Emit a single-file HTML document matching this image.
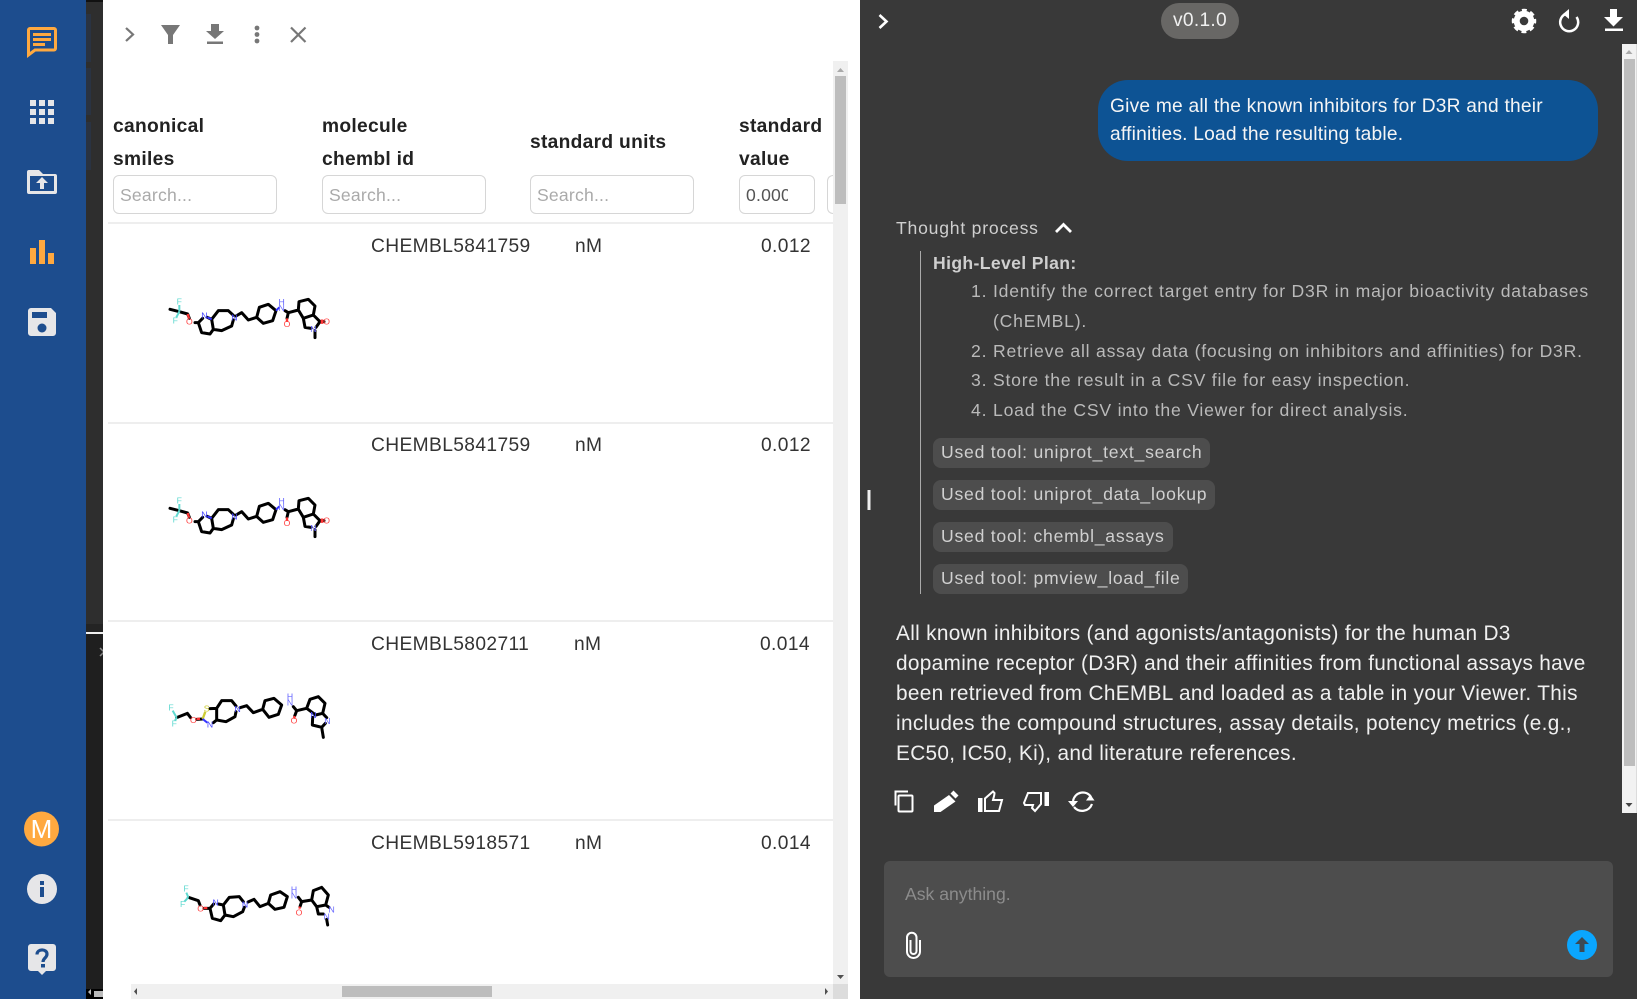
<!DOCTYPE html>
<html><head><meta charset="utf-8"><title>Chat and table</title>
<style>
html,body{margin:0;padding:0;width:1637px;height:999px;overflow:hidden;background:#393939;font-family:"Liberation Sans",sans-serif}
div,span,svg,input{position:absolute;box-sizing:border-box}
svg{display:block;overflow:visible}
.th{font-weight:700;font-size:19.2px;letter-spacing:.3px;color:#222;line-height:33px;white-space:nowrap}
.in{top:175px;height:39px;border:1px solid #d6d6d6;border-radius:6px;background:#fff;font-size:17.6px;letter-spacing:.2px;color:#aaa;padding:9px 6px;line-height:20px;overflow:hidden;white-space:nowrap}
.hr{left:108px;width:725px;height:2px;background:#eee}
.td{font-size:19.2px;letter-spacing:.38px;color:#333;line-height:24px;white-space:nowrap}
.t{white-space:nowrap;letter-spacing:.5px}
.li{color:#bababa;font-size:17.6px;line-height:24px;letter-spacing:.78px;white-space:nowrap}
.chip{left:933px;height:30px;background:#4d4d4d;border-radius:8px;color:#d0d0d0;font-size:17.6px;letter-spacing:.76px;line-height:28px;padding-left:8px;white-space:nowrap}
.ans{left:896px;color:#f0f0f0;font-size:20.8px;letter-spacing:.32px;line-height:30px;white-space:nowrap}
.mol{filter:blur(.35px)}
.mol text{font-family:"Liberation Sans",sans-serif;font-size:26px;text-anchor:middle;dominant-baseline:central}
.mol .b{fill:none;stroke:#000;stroke-width:9;stroke-linejoin:round;stroke-linecap:round}
.mol .c{fill:none;stroke:#5fd9d0;stroke-width:6}
.mol .r{fill:none;stroke:#f33;stroke-width:7}
.mol .u{fill:none;stroke:#33f;stroke-width:6}
</style></head><body>

<!-- left rail -->
<div style="left:0;top:0;width:86px;height:999px;background:#1d4d8e"></div>
<svg style="left:0;top:0" width="86" height="999">
 <path d="M30 28.500h24a1.500 1.500 0 0 1 1.500 1.500v18.500a1.500 1.500 0 0 1-1.500 1.500H35l-6.500 5V30a1.500 1.500 0 0 1 1.500-1.500z" fill="none" stroke="#ffa940" stroke-width="3"/>
 <path d="M33 33h18v3H33zM33 38h18v3H33zM33 43h12v3H33z" fill="#ffa940"/>
 <path d="M30 100h6v6h-6zM39 100h6v6h-6zM48 100h6v6h-6zM30 109h6v6h-6zM39 109h6v6h-6zM48 109h6v6h-6zM30 118h6v6h-6zM39 118h6v6h-6zM48 118h6v6h-6z" fill="#e6e6e8"/>
 <path fill-rule="evenodd" d="M29 170h10l4 4h12a2 2 0 0 1 2 2v16a2 2 0 0 1-2 2H29a2 2 0 0 1-2-2v-20a2 2 0 0 1 2-2zM30 176v15h24v-15z" fill="#e6e6e8"/>
 <path d="M42 177l6 6h-4v6h-4v-6h-4z" fill="#e6e6e8"/>
 <path d="M30 248h6v16h-6zM39 240h6v24h-6zM48 253h6v11h-6z" fill="#ffa940"/>
 <path fill-rule="evenodd" d="M31 308h20l5 5v20a3 3 0 0 1-3 3H31a3 3 0 0 1-3-3v-22a3 3 0 0 1 3-3zM32 312v6h15v-6z" fill="#e6e6e8"/>
 <circle cx="42" cy="328" r="4.500" fill="#1d4d8e"/>
 <circle cx="41.500" cy="829" r="17.500" fill="#ffa940"/>
 <circle cx="42" cy="889" r="15" fill="#e6e6e8"/>
 <path d="M40 887h4v10h-4zM40 881h4v4h-4z" fill="#1d4d8e"/>
 <path d="M31 944h22a3 3 0 0 1 3 3v21a3 3 0 0 1-3 3h-7l-4 4-4-4h-7a3 3 0 0 1-3-3v-21a3 3 0 0 1 3-3z" fill="#e6e6e8"/>
 <path d="M37 954.500c0-6 10-6 10-.5 0 4-4 4-4 8" fill="none" stroke="#1d4d8e" stroke-width="3.200"/>
 <path d="M41 964h4v3.500h-4z" fill="#1d4d8e"/>
</svg>
<div style="left:24px;top:812px;width:35px;height:35px;line-height:35px;text-align:center;color:#fff;font-size:26px">M</div>

<!-- dark strip -->
<div style="left:86px;top:0;width:18px;height:632px;background:#2e2e2e"></div>
<div style="left:86px;top:0;width:18px;height:2px;background:#111"></div>
<div style="left:86px;top:14px;width:5px;height:48px;background:#2a3342"></div>
<div style="left:86px;top:68px;width:5px;height:47px;background:#2a3342"></div>
<div style="left:86px;top:122px;width:5px;height:48px;background:#2a3342"></div>
<div style="left:86px;top:624px;width:18px;height:8px;background:#242424"></div>
<div style="left:86px;top:632px;width:18px;height:2px;background:#f0f0f0"></div>
<div style="left:86px;top:634px;width:18px;height:365px;background:#1f1f1f"></div>
<div style="left:86px;top:989px;width:18px;height:10px;background:#000"></div>
<div style="left:94px;top:991px;width:10px;height:6px;background:#bbb"></div>
<svg style="left:86px;top:640px" width="18" height="359"><path d="M14 8l4 4-4 4" fill="none" stroke="#888" stroke-width="1.500"/><path d="M5 349l-3 3 3 3z" fill="#bbb"/></svg>

<!-- white panel -->
<div style="left:103px;top:0;width:757px;height:999px;background:#fff"></div>

<!-- toolbar -->
<svg style="left:103px;top:0" width="220" height="60">
 <path d="M23 28l7 6.500-7 6.500" fill="none" stroke="#777" stroke-width="2.200"/>
 <path d="M58 25h19l-7 10v9h-5v-9z" fill="#777"/>
 <path d="M108 24h8v7h5l-9 8-9-8h5z" fill="#777"/>
 <path d="M104 41.500h16V44h-16z" fill="#777"/>
 <circle cx="154" cy="28" r="2.400" fill="#777"/><circle cx="154" cy="34.500" r="2.400" fill="#777"/><circle cx="154" cy="41" r="2.400" fill="#777"/>
 <path d="M188 27.500l14.500 14.500M202.500 27.500L188 42" fill="none" stroke="#777" stroke-width="2.200"/>
</svg>

<!-- headers -->
<div class="th" style="left:113px;top:110px">canonical<br>smiles</div>
<div class="th" style="left:322px;top:110px">molecule<br>chembl id</div>
<div class="th" style="left:530px;top:126px">standard units</div>
<div class="th" style="left:739px;top:110px">standard<br>value</div>
<div class="in" style="left:113px;width:164px">Search...</div>
<div class="in" style="left:322px;width:164px">Search...</div>
<div class="in" style="left:530px;width:164px">Search...</div>
<div class="in" style="left:739px;width:76px;color:#555;padding-right:27px"><span style="position:relative;display:block;width:42px;overflow:hidden">0.0001</span></div>
<div class="in" style="left:827px;width:20px;border-right:0;border-radius:6px 0 0 6px"></div>

<!-- rows -->
<div class="hr" style="top:222px"></div>
<div class="hr" style="top:422px"></div>
<div class="hr" style="top:620px"></div>
<div class="hr" style="top:819px"></div>
<div class="td" style="left:371px;top:234.500px">CHEMBL5841759</div><div class="td" style="left:575px;top:234.500px">nM</div><div class="td" style="left:761px;top:234.500px">0.012</div>
<div class="td" style="left:371px;top:433.500px">CHEMBL5841759</div><div class="td" style="left:575px;top:433.500px">nM</div><div class="td" style="left:761px;top:433.500px">0.012</div>
<div class="td" style="left:371px;top:632.500px">CHEMBL5802711</div><div class="td" style="left:574px;top:632.500px">nM</div><div class="td" style="left:760px;top:632.500px">0.014</div>
<div class="td" style="left:371px;top:832px">CHEMBL5918571</div><div class="td" style="left:575px;top:832px">nM</div><div class="td" style="left:761px;top:832px">0.014</div>

<!-- molecule 1 -->
<svg class="mol" style="left:150px;top:270px" width="200" height="110" viewBox="0 0 600 330">
 <path class="b" d="M60 118L88 125L113 132L118 145M135 158L145 158M145 158L155 188L180 192L190 178L185 148L172 142M145 158L158 145M185 148L205 122L235 122L250 136M250 150L245 168L215 182L190 178M258 138L275 128L295 150L320 142L328 112L355 103L378 122L368 152L340 160L320 142M405 122L415 128L445 120L447 95L475 88L495 108L490 135L460 145L445 120M415 128L411 145M460 145L465 172L483 175M490 135L510 155L522 155M495 182L495 203M510 155L498 172"/>
 <path class="c" d="M88 125L88 105M88 125L79 142"/><path class="r" d="M113 132L117 145M411 145L411 156M512 152L520 152M512 158L520 158"/>
 <path class="u" d="M378 122L388 112M185 148L172 142"/>
 <text x="88" y="95" fill="#5fd9d0">F</text><text x="76" y="152" fill="#5fd9d0">F</text><text x="118" y="155" fill="#f44">O</text><text x="163" y="137" fill="#44f">N</text><text x="253" y="142" fill="#44f">N</text><text x="395" y="96" fill="#66f">H</text><text x="395" y="114" fill="#66f">N</text><text x="411" y="162" fill="#f44">O</text><text x="530" y="155" fill="#f44">O</text><text x="490" y="177" fill="#66f">N</text>
</svg>
<!-- molecule 2 -->
<svg class="mol" style="left:150px;top:469px" width="200" height="110" viewBox="0 0 600 330">
 <path class="b" d="M60 118L88 125L113 132L118 145M135 158L145 158M145 158L155 188L180 192L190 178L185 148L172 142M145 158L158 145M185 148L205 122L235 122L250 136M250 150L245 168L215 182L190 178M258 138L275 128L295 150L320 142L328 112L355 103L378 122L368 152L340 160L320 142M405 122L415 128L445 120L447 95L475 88L495 108L490 135L460 145L445 120M415 128L411 145M460 145L465 172L483 175M490 135L510 155L522 155M495 182L495 203M510 155L498 172"/>
 <path class="c" d="M88 125L88 105M88 125L79 142"/><path class="r" d="M113 132L117 145M411 145L411 156M512 152L520 152M512 158L520 158"/>
 <path class="u" d="M378 122L388 112M185 148L172 142"/>
 <text x="88" y="95" fill="#5fd9d0">F</text><text x="76" y="152" fill="#5fd9d0">F</text><text x="118" y="155" fill="#f44">O</text><text x="163" y="137" fill="#44f">N</text><text x="253" y="142" fill="#44f">N</text><text x="395" y="96" fill="#66f">H</text><text x="395" y="114" fill="#66f">N</text><text x="411" y="162" fill="#f44">O</text><text x="530" y="155" fill="#f44">O</text><text x="490" y="177" fill="#66f">N</text>
</svg>
<!-- molecules 3 and 4 -->
<svg class="mol" style="left:150px;top:670px" width="200" height="270" viewBox="0 0 600 810">
 <path class="b" d="M80 143L112 130L122 143M140 148L158 147M180 116L200 115M190 158L200 150L200 115L215 92L245 92L258 108M258 125L255 140L228 155L200 150M270 113L290 107L310 128L338 118L345 92L372 85L395 105L385 133L357 142L338 118M430 110L440 122L470 115L480 88L505 80L525 100L518 130L497 135L470 115M440 122L434 138M488 142L487 165L515 172L526 160M518 130L530 143M515 172L520 202"/>
 <path class="c" d="M80 143L68 122M80 143L75 152"/><path class="r" d="M434 138L432 146M140 147L150 146"/>
 <path fill="none" stroke="#cc3" stroke-width="7" d="M158 147L166 125"/><path class="u" d="M158 147L172 158"/>
 <text x="63" y="113" fill="#5fd9d0">F</text><text x="73" y="160" fill="#5fd9d0">F</text><text x="130" y="150" fill="#f44">O</text><text x="170" y="115" fill="#cc3">S</text><text x="180" y="163" fill="#44f">N</text><text x="263" y="117" fill="#44f">N</text><text x="420" y="80" fill="#66f">H</text><text x="420" y="98" fill="#66f">N</text><text x="432" y="152" fill="#f44">O</text><text x="490" y="135" fill="#44f">N</text><text x="532" y="153" fill="#66f">N</text>
 <path class="b" d="M115 682L145 692L150 705M162 715L180 715M180 715L191 702M205 702L220 705M180 715L187 745L212 752L225 735L220 705L238 682L268 680L280 695M283 712L278 725L250 740L225 735M294 696L312 688L330 710L355 700L362 675L390 665L412 680L402 712L375 718L355 700M445 682L455 695L485 690L490 662L515 652L535 675L527 705L500 710L485 690M455 695L450 710M500 710L505 732L520 732M527 705L537 712M530 748L533 765"/>
 <path class="c" d="M115 682L109 668M115 682L103 695"/><path class="r" d="M450 710L448 716M162 714L172 714"/>
 <text x="108" y="655" fill="#5fd9d0">F</text><text x="98" y="702" fill="#5fd9d0">F</text><text x="152" y="715" fill="#f44">O</text><text x="197" y="698" fill="#44f">N</text><text x="285" y="703" fill="#44f">N</text><text x="432" y="658" fill="#66f">H</text><text x="432" y="676" fill="#66f">N</text><text x="447" y="727" fill="#f44">O</text><text x="545" y="718" fill="#66f">N</text><text x="530" y="740" fill="#66f">N</text>
</svg>

<!-- panel scrollbars -->
<div style="left:833px;top:61px;width:15px;height:923px;background:#f0f0f0"></div>
<div style="left:835px;top:76px;width:11px;height:128px;background:#bdbdbd"></div>
<svg style="left:833px;top:61px" width="15" height="923"><path d="M4 11l3.500-4 3.500 4z" fill="#aaa"/><path d="M4 914h7l-3.500 4z" fill="#505050"/></svg>
<div style="left:131px;top:984px;width:702px;height:15px;background:#f0f0f0"></div>
<div style="left:833px;top:984px;width:15px;height:15px;background:#dcdcdc"></div>
<div style="left:342px;top:986px;width:150px;height:11px;background:#bdbdbd"></div>
<svg style="left:131px;top:984px" width="702" height="15"><path d="M6 4v7l-3-3.500z" fill="#505050"/><path d="M694 4v7l3-3.500z" fill="#505050"/></svg>

<!-- chat panel -->
<div style="left:860px;top:0;width:777px;height:999px;background:#393939"></div>
<svg style="left:860px;top:0" width="777" height="999">
 <path d="M19.500 15l7 6.500-7 6.500" fill="none" stroke="#fff" stroke-width="2.600"/>
 <path d="M9 490v20" stroke="#f0f0f0" stroke-width="3"/>
 <!-- gear -->
 <g transform="translate(664 21)">
  <circle r="7.300" fill="none" stroke="#fff" stroke-width="6"/>
  <circle r="10.500" fill="none" stroke="#fff" stroke-width="3.500" stroke-dasharray="4.750 3.500" stroke-dashoffset="2.400"/>
 </g>
 <!-- reset -->
 <path d="M707 13.500A9 9 0 1 0 716.500 17" fill="none" stroke="#fff" stroke-width="2.500"/>
 <path d="M709 9v10l-6-5z" fill="#fff"/>
 <!-- download -->
 <path d="M750 9h7v8h6l-9.500 9.500L744 17h6z" fill="#fff"/><path d="M745 28.500h18V31h-18z" fill="#fff"/>
 <!-- chevron up -->
 <path d="M196 233l7.500-7.500 7.500 7.500" fill="none" stroke="#fff" stroke-width="2.800" transform="translate(0 -1)"/>
 <!-- vertical rule -->
 <path d="M60.500 251v343" stroke="#aaa" stroke-width="1"/>
 <!-- copy -->
 <path d="M48 791.500H35.500v14" fill="none" stroke="#fff" stroke-width="2"/><rect x="38.500" y="795.500" width="14" height="16" rx="1" fill="none" stroke="#fff" stroke-width="2"/>
 <!-- pencil -->
 <path d="M74 812v-6.500L89 795l6.500 6.500L80.500 812zM90.500 793.500l3-3 5 5-3 3z" fill="#fff"/>
 <!-- up -->
 <rect x="118" y="798" width="4.500" height="14" fill="#fff"/>
 <path d="M125 811V798.500l8-7 1.500 1.500c0 2-1 5-1.500 7h9l-3 11z" fill="none" stroke="#fff" stroke-width="2"/>
 <!-- down -->
 <rect x="184.500" y="792" width="4.500" height="14" fill="#fff"/>
 <path d="M181 793H168l-4 10 1 2h8l-1 3 3 3 6-7V793z" fill="none" stroke="#fff" stroke-width="2"/>
 <!-- refresh -->
 <path d="M213 801c2-10 14-11 18-4M232 804c-3 8-13 9-18 3" fill="none" stroke="#fff" stroke-width="2.200"/>
 <path d="M226 800.500h8.500l-4.200-6z" fill="#fff"/><path d="M208 801h10l-5 6z" fill="#fff"/>
</svg>

<div style="left:1161px;top:3px;width:78px;height:36px;border-radius:18px;background:#686765;color:#f0f0f0;text-align:center;line-height:36px;font-size:19.2px;letter-spacing:.3px">v0.1.0</div>
<div style="left:1622px;top:44px;width:14px;height:769px;background:#f2f2f2"></div>
<div style="left:1636px;top:44px;width:1px;height:769px;background:#dcdcdc"></div>
<div style="left:1624px;top:59px;width:11px;height:707px;background:#bdbdbd"></div>
<svg style="left:1622px;top:44px" width="14" height="769"><path d="M3.500 10l3.500-4 3.500 4z" fill="#aaa"/><path d="M3.500 759h7l-3.500 4z" fill="#444"/></svg>

<div style="left:1098px;top:80px;width:500px;height:81px;border-radius:30px;background:#0d5394"></div>
<div class="t" style="left:1110px;top:93px;color:#f5f5f5;font-size:19.2px;letter-spacing:.21px;line-height:28px">Give me all the known inhibitors for D3R and their<br>affinities. Load the resulting table.</div>

<div class="t" style="left:896px;top:216px;color:#cfcfcf;font-size:17.6px;letter-spacing:.78px;line-height:24px">Thought process</div>
<div class="t" style="left:933px;top:251px;color:#cfcfcf;font-size:17.6px;font-weight:700;letter-spacing:.36px;line-height:24px">High-Level Plan:</div>
<div class="li" style="left:971px;top:279px">1.</div><div class="li" style="left:993px;top:279px">Identify the correct target entry for D3R in major bioactivity databases</div>
<div class="li" style="left:993px;top:309px">(ChEMBL).</div>
<div class="li" style="left:971px;top:339px">2.</div><div class="li" style="left:993px;top:339px">Retrieve all assay data (focusing on inhibitors and affinities) for D3R.</div>
<div class="li" style="left:971px;top:368px">3.</div><div class="li" style="left:993px;top:368px">Store the result in a CSV file for easy inspection.</div>
<div class="li" style="left:971px;top:398px">4.</div><div class="li" style="left:993px;top:398px">Load the CSV into the Viewer for direct analysis.</div>

<div class="chip" style="top:438px;width:277px">Used tool: uniprot_text_search</div>
<div class="chip" style="top:480px;width:282px">Used tool: uniprot_data_lookup</div>
<div class="chip" style="top:522px;width:240px">Used tool: chembl_assays</div>
<div class="chip" style="top:564px;width:255px">Used tool: pmview_load_file</div>

<div class="ans" style="top:619px">All known inhibitors (and agonists/antagonists) for the human D3</div>
<div class="ans" style="top:649px">dopamine receptor (D3R) and their affinities from functional assays have</div>
<div class="ans" style="top:679px">been retrieved from ChEMBL and loaded as a table in your Viewer. This</div>
<div class="ans" style="top:709px">includes the compound structures, assay details, potency metrics (e.g.,</div>
<div class="ans" style="top:739px">EC50, IC50, Ki), and literature references.</div>

<div style="left:884px;top:861px;width:729px;height:116px;border-radius:6px;background:#4d4d4d"></div>
<div style="left:905px;top:882px;color:#8c8c8c;font-size:17.6px;line-height:24px">Ask anything.</div>
<svg style="left:884px;top:861px" width="729" height="116">
 <path d="M26.500 79V90a3 3 0 0 0 6 0V76.500a4.750 4.750 0 0 0-9.500 0V90.500a6.500 6.500 0 0 0 13 0V79" fill="none" stroke="#fff" stroke-width="2"/>
 <circle cx="698" cy="84" r="15" fill="#0aa6ff"/>
 <path d="M698 76l7 7h-4.500v8h-5v-8H691z" fill="#3c4a55"/>
</svg>
</body></html>
